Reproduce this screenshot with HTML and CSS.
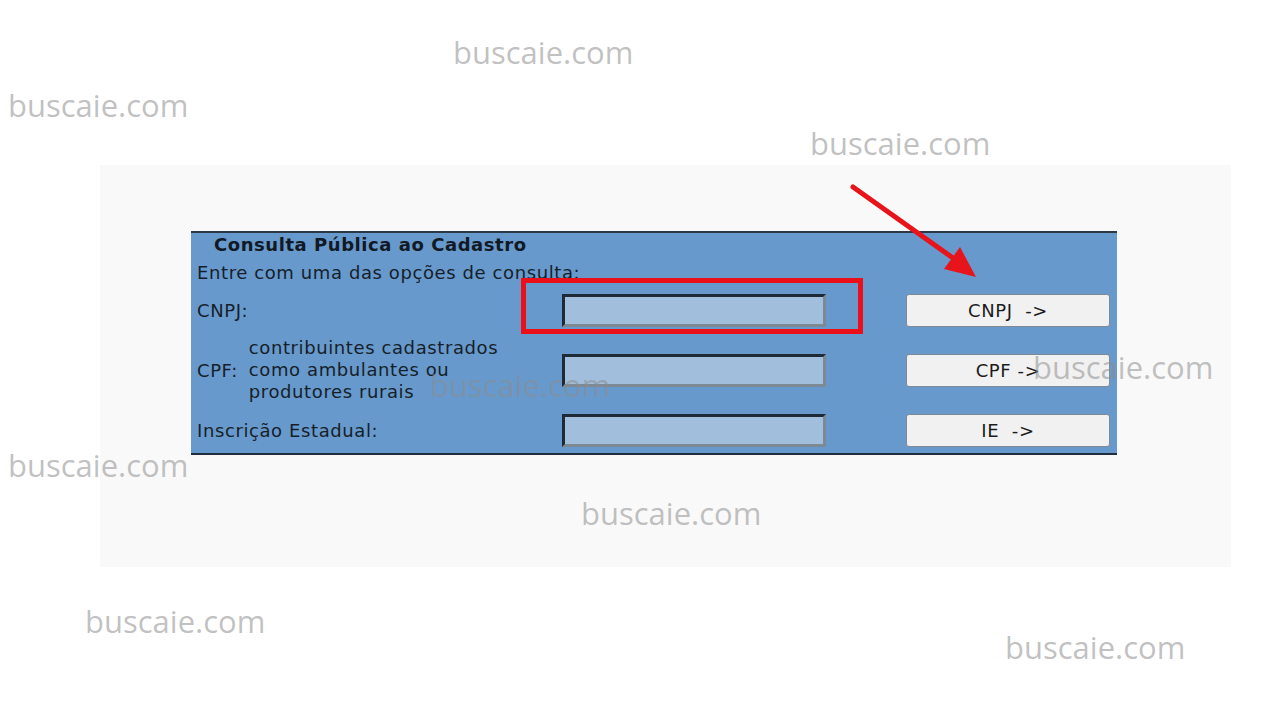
FILE: index.html
```html
<!DOCTYPE html>
<html lang="pt">
<head>
<meta charset="utf-8">
<title>Consulta Pública ao Cadastro</title>
<link rel="stylesheet" href="styles.css">
</head>
<body>
<div class="page">
  <div class="sheet">
    <div class="panel">
      <div class="title">Consulta Pública ao Cadastro</div>
      <div class="intro">Entre com uma das opções de consulta:</div>
      <div class="rows">
        <div class="row">
          <div class="label">CNPJ:</div>
          <div class="field"><span class="input"></span></div>
          <div class="action"><span class="btn">CNPJ&nbsp;&nbsp;-&gt;</span></div>
        </div>
        <div class="row">
          <div class="label label-cpf"><span>CPF:</span><span class="note">contribuintes cadastrados<br>como ambulantes ou<br>produtores rurais</span></div>
          <div class="field"><span class="input"></span></div>
          <div class="action"><span class="btn">CPF -&gt;</span></div>
        </div>
        <div class="row">
          <div class="label">Inscrição Estadual:</div>
          <div class="field"><span class="input"></span></div>
          <div class="action"><span class="btn">IE&nbsp;&nbsp;-&gt;</span></div>
        </div>
      </div>
    </div>
  </div>

  <div class="highlight"></div>
  <svg class="arrow" width="140" height="110" viewBox="0 0 140 110">
    <line x1="5" y1="4" x2="112" y2="80" stroke="#e8141b" stroke-width="5" stroke-linecap="round"/>
    <polygon points="128,94 96,86 112,64" fill="#e8141b"/>
  </svg>

  <span class="wm wm1">buscaie.com</span>
  <span class="wm wm2">buscaie.com</span>
  <span class="wm wm3">buscaie.com</span>
  <span class="wm wm4">buscaie.com</span>
  <span class="wm wm5">buscaie.com</span>
  <span class="wm wm6">buscaie.com</span>
  <span class="wm wm7">buscaie.com</span>
  <span class="wm wm8">buscaie.com</span>
  <span class="wm wm9">buscaie.com</span>
</div>
</body>
</html>
```
FILE: styles.css
```css
html, body {
  margin: 0;
  padding: 0;
  background: #ffffff;
}

.page {
  position: relative;
  width: 1270px;
  height: 720px;
  overflow: hidden;
  padding-top: 165px;
  box-sizing: border-box;
}

.sheet {
  margin-left: 100px;
  width: 1131px;
  height: 402px;
  background: #f9f9f9;
  padding-top: 66px;
  padding-left: 91px;
  box-sizing: border-box;
}

.panel {
  width: 926px;
  height: 224px;
  box-sizing: border-box;
  background: #6799cc;
  border-top: 2px solid #2b3845;
  border-bottom: 2px solid #1f2d3c;
  font-family: "DejaVu Sans", Verdana, sans-serif;
  font-size: 18px;
  letter-spacing: 0.6px;
  color: #161f29;
  display: flex;
  flex-direction: column;
}

.title {
  flex: none;
  font-weight: bold;
  font-size: 18px;
  letter-spacing: 0.55px;
  color: #111a24;
  padding-left: 23px;
  height: 23px;
  line-height: 23px;
}

.intro {
  flex: none;
  padding-left: 6px;
  margin-top: 5px;
  height: 24px;
  line-height: 24px;
}

.rows {
  flex: none;
  margin-top: -5px;
  display: flex;
  flex-direction: column;
}

.row {
  flex: none;
  display: flex;
  align-items: center;
  height: 60px;
}

.label {
  width: 371px;
  padding-left: 6px;
  box-sizing: border-box;
}

.label-cpf {
  display: flex;
  align-items: center;
  gap: 11px;
}

.note {
  line-height: 22px;
}

.field {
  width: 344px;
}

.input {
  display: block;
  width: 264px;
  height: 33px;
  box-sizing: border-box;
  background: #a2bedd;
  border-style: solid;
  border-width: 3px;
  border-color: #1e2a36 #7d8a96 #7d8a96 #1e2a36;
}

.btn {
  display: flex;
  align-items: center;
  justify-content: center;
  width: 204px;
  height: 33px;
  box-sizing: border-box;
  background: #f1f1f1;
  border: 1px solid #7f8a95;
  border-radius: 3px;
  color: #1c1c1c;
  white-space: pre;
}

.highlight {
  position: absolute;
  left: 521px;
  top: 278px;
  width: 342px;
  height: 56px;
  box-sizing: border-box;
  border: 5px solid #ea0f18;
}

.arrow {
  position: absolute;
  left: 848px;
  top: 183px;
}

.wm {
  position: absolute;
  font-family: "Open Sans", sans-serif;
  font-size: 31px;
  line-height: 32px;
  color: rgba(140, 140, 140, 0.55);
  white-space: nowrap;
}

.wm1 { left: 453px; top: 36px; }
.wm2 { left: 8px; top: 89px; }
.wm3 { left: 810px; top: 127px; }
.wm4 { left: 1033px; top: 351px; }
.wm5 { left: 430px; top: 369px; }
.wm6 { left: 8px; top: 449px; }
.wm7 { left: 581px; top: 497px; }
.wm8 { left: 85px; top: 605px; }
.wm9 { left: 1005px; top: 631px; }
```
